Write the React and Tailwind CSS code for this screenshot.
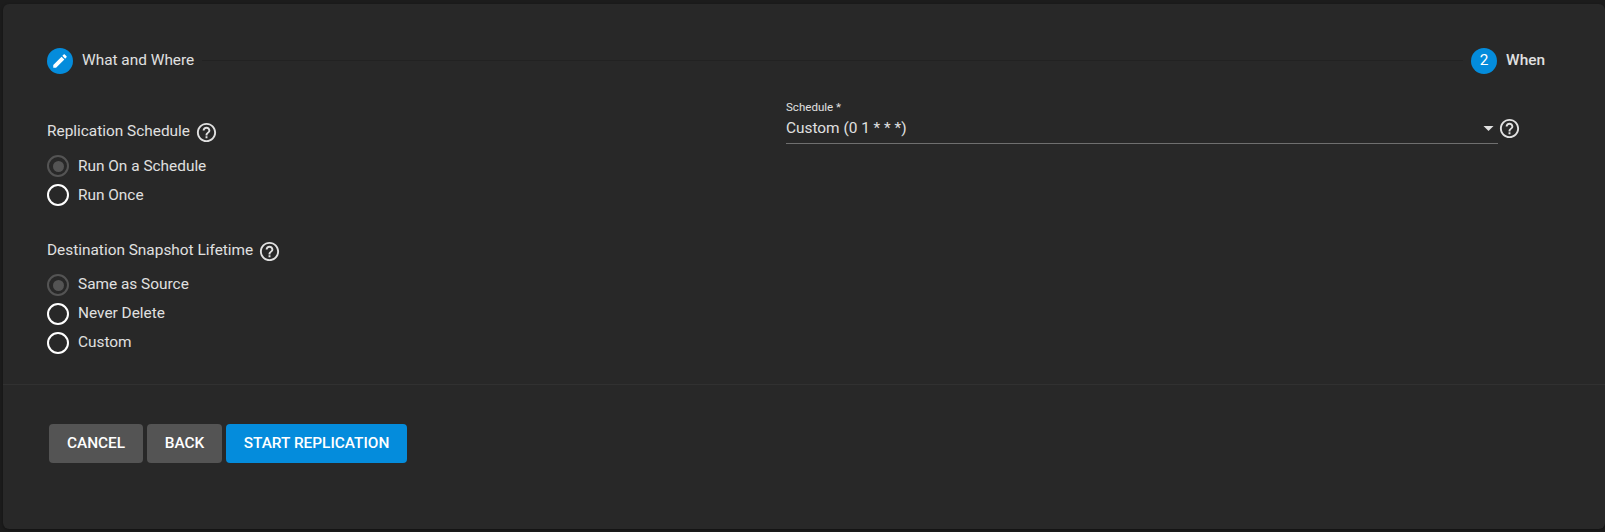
import React from "react";

function HelpIcon({ className = "" }) {
  return (
    <svg viewBox="0 0 24 24" className={`size-[23px] shrink-0 fill-[#e0e0e0] ${className}`}>
      <path d="M11 18h2v-2h-2v2zm1-16C6.48 2 2 6.48 2 12s4.480 10 10 10 10-4.480 10-10S17.520 2 12 2zm0 18c-4.410 0-8-3.590-8-8s3.590-8 8-8 8 3.590 8 8-3.590 8-8 8zm0-14c-2.210 0-4 1.790-4 4h2c0-1.100.9-2 2-2s2 .9 2 2c0 2-3 1.750-3 5h2c0-2.250 3-2.500 3-5 0-2.210-1.790-4-4-4z" />
    </svg>
  );
}

function Radio({ label, checked, labelClass }) {
  return (
    <label className="flex h-[29px] items-start">
      <span
        className={`flex size-[22px] shrink-0 items-center justify-center rounded-full border-2 ${
          checked ? "border-[#545454]" : "border-white"
        }`}
      >
        {checked && <span className="size-[11px] rounded-full bg-[#545454]" />}
      </span>
      <span className={`ml-[9px] ${labelClass}`}>{label}</span>
    </label>
  );
}

function RadioGroup({ title, options, className = "", labelClass }) {
  return (
    <div className={className}>
      <div className="flex h-[35px] items-start">
        <span className="leading-[22px]">{title}</span>
        <HelpIcon className="ml-[5px] mt-px" />
      </div>
      {options.map((option, i) => (
        <Radio key={option} label={option} checked={i === 0} labelClass={labelClass} />
      ))}
    </div>
  );
}

function Button({ children, className }) {
  return (
    <button className={`h-[39px] rounded text-center font-medium text-white ${className}`}>
      <span className="block leading-[37px] -mt-px">{children}</span>
    </button>
  );
}

export default function App() {
  return (
    <div className="h-[532px] w-full overflow-hidden bg-[#1c1c1c] pl-[3px] pt-1 font-['Roboto',sans-serif] text-[15.4px] text-[#e0e0e0]">
      <main className="flex h-[525px] flex-col rounded-md bg-[#282828] shadow-[0_1px_3px_rgba(0,0,0,0.4)]">
        <header className="flex h-[70px] items-start pl-11 pr-[60px] pt-11">
          <span className="flex size-[26px] items-center justify-center rounded-full bg-[#048cdc]">
            <svg viewBox="0 0 24 24" className="size-[18px] fill-white">
              <path d="M3 17.250V21h3.750L17.810 9.940l-3.750-3.750L3 17.250zM20.710 7.040c.39-.39.39-1.020 0-1.410l-2.340-2.340c-.39-.39-1.020-.39-1.410 0l-1.830 1.830 3.750 3.750 1.830-1.830z" />
            </svg>
          </span>
          <span className="ml-[9px] leading-6">What and Where</span>
          <span className="ml-2 mr-2 mt-3 h-px flex-1 bg-[#222222]" />
          <span className="flex size-[26px] justify-center rounded-full bg-[#048cdc] leading-6 text-white">2</span>
          <span className="ml-[9px] font-medium leading-6">When</span>
        </header>

        <section className="flex h-[311px] items-start border-b border-[#313131] pl-11">
          <div className="w-[739px] pt-[46px]">
            <RadioGroup
              title="Replication Schedule"
              options={["Run On a Schedule", "Run Once"]}
              labelClass="leading-[22px]"
            />
            <RadioGroup
              className="mt-[26px]"
              title="Destination Snapshot Lifetime"
              options={["Same as Source", "Never Delete", "Custom"]}
              labelClass="leading-5"
            />
          </div>
          <div className="flex items-start pt-[25px]">
            <div className="w-[712px] border-b border-[#6f6f6f] pb-1">
              <div className="text-[11.55px] leading-4">Schedule *</div>
              <div className="mt-0.5 flex items-center justify-between pr-1">
                <span className="leading-[22px]">Custom (0 1 * * *)</span>
                <svg viewBox="0 0 10 5" className="h-[5px] w-[11px] fill-[#e0e0e0]">
                  <path d="M0 0h10L5 5z" />
                </svg>
              </div>
            </div>
            <HelpIcon className="mt-[18px]" />
          </div>
        </section>

        <footer className="flex gap-1 pl-[46px] pt-[39px]">
          <Button className="w-[94px] bg-[#545454]">CANCEL</Button>
          <Button className="w-[75px] bg-[#545454]">BACK</Button>
          <Button className="w-[181px] bg-[#048cdc]">START REPLICATION</Button>
        </footer>
      </main>
    </div>
  );
}
